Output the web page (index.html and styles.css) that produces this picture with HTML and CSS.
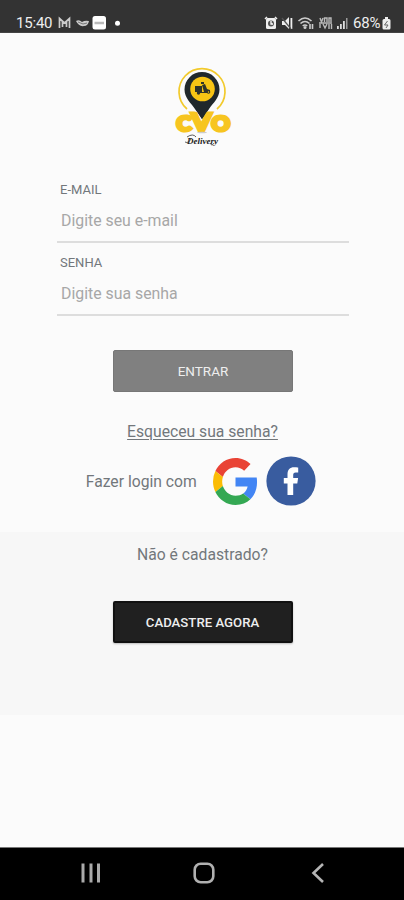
FILE: index.html
```html
<!DOCTYPE html>
<html lang="pt-BR">
<head>
<meta charset="utf-8">
<title>CVO Delivery</title>
<link rel="stylesheet" href="styles.css">
</head>
<body>
<header class="status">
  <span class="clock">15:40</span>
  <svg class="notices" width="66" height="16" viewBox="0 0 66 16">
    <path d="M1.500 13V3.500L6.500 8l5-4.500V13M4.500 12V7M8.500 12V7" fill="none" stroke="#ccc" stroke-width="1.700"/>
    <path d="M18 6q3-2 6 1 3-2 7-1-1 5-5 5-5 1-8-5z" fill="#ccc"/><path d="M20 7l5 2 4-1" stroke="#777" fill="none"/>
    <rect x="34.500" y="1" width="13.500" height="13.500" rx="2.500" fill="#fff"/><path d="M36.500 8h9.500" stroke="#bbb" stroke-width="2.500"/>
    <circle cx="59.500" cy="8.300" r="2.500" fill="#fff"/>
  </svg>
  <svg class="system" width="88" height="16" viewBox="0 0 88 16">
    <rect x="2" y="3" width="10" height="11" rx="1.500" fill="#eee"/><path d="M1 4l2-2M13 4l-2-2" stroke="#eee" stroke-width="1.500"/><circle cx="7" cy="8.500" r="3" fill="#555"/><path d="M7 6v3h2" fill="none" stroke="#fff" stroke-width="1.300"/>
    <path d="M18 6h3l4-4v12l-4-4h-3zM26.500 3h1.800v11h-1.800z" fill="#eee"/><path d="M18 3l9 11" stroke="#555" stroke-width="1.200"/>
    <g fill="none" stroke="#ccc" stroke-width="1.600"><path d="M34.500 6q6.500-6 13 0M36.500 8.500q4.500-4 9 0M38.700 11q2.300-2 4.500 0"/><path d="M46 9v5M48.500 9v5"/></g><circle cx="41" cy="12.500" r="1.500" fill="#ccc"/>
    <g fill="none" stroke="#bbb" stroke-width="1.400"><path d="M56 3l1.500 4L59 3M60.500 7V3h2.500v4M65 7V3h2v4M56 9v4M59 9l2 4 2-4M65 9v5M67.500 9v5M55 8h13"/></g>
    <path d="M73 11h1.800v3H73zM76 9h1.800v5H76zM79 6h1.800v8H79z" fill="#ddd"/><path d="M82 3h1.500v11H82z" fill="#999"/>
  </svg>
  <span class="percent">68%</span>
  <svg class="battery" width="9" height="13" viewBox="0 0 9 13"><path d="M3 0h3v2h1q1.500 0 1.500 1.500v7.500q0 1.500-1.500 1.500H2Q.5 12.500.5 11V3.500Q.5 2 2 2h1z" fill="#eee"/><path d="M5.500 4L2.500 8H6l-2 3" fill="none" stroke="#666"/></svg>
</header>
<main>
  <svg class="logo" width="84" height="90" viewBox="0 0 84 90">
    <path d="M27 49a23 23 0 1 1 30 0" fill="none" stroke="#f2ca2c" stroke-width="1.700"/>
    <path d="M42 12a17.500 17.500 0 0 1 17.500 17.500C59.500 38 53 43 49 49L42 59 35 49C31 43 24.500 38 24.500 29.500A17.500 17.500 0 0 1 42 12z" fill="#20282b"/>
    <circle cx="42.500" cy="29" r="12.300" fill="#f8c414"/>
    <path d="M35 26h7v6h-7zM42 25l3-1 2 5 3 1v3H37v-1h7zM41 22h3v2h-3z" fill="#30332a"/><circle cx="38.500" cy="33" r="1.700" fill="#30332a"/><circle cx="48.500" cy="32" r="1.800" fill="#30332a"/><circle cx="48.500" cy="32" r=".7" fill="#f8c414"/>
    <text class="mark" x="16.500" y="70.500" textLength="53.500" lengthAdjust="spacingAndGlyphs">C<tspan class="tall">V</tspan>O</text>
    <path d="M34.500 47.500h15L42 59z" fill="#20282b"/>
    <ellipse cx="42" cy="72.500" rx="5" ry=".7" fill="#ccc"/>
    <text class="script" x="27" y="83.500" textLength="31" lengthAdjust="spacingAndGlyphs">Delivery</text>
    <path d="M25 82q4 2 6-4M27 77q6-4 9 0M50 83q2 4 4 0" fill="none" stroke="#333" stroke-width=".8"/>
  </svg>
  <form class="login">
    <label for="email">E-MAIL</label>
    <input id="email" type="text" placeholder="Digite seu e-mail">
    <label for="password">SENHA</label>
    <input id="password" type="password" placeholder="Digite sua senha">
    <button class="button enter" type="button">ENTRAR</button>
  </form>
  <a class="forgot">Esqueceu sua senha?</a>
  <div class="social">
    <span>Fazer login com</span>
    <svg class="google" width="45" height="47" viewBox="0 0 48 48" preserveAspectRatio="none">
      <path fill="#e94335" d="M24 9.500c3.540 0 6.710 1.220 9.210 3.600l6.850-6.850C35.900 2.380 30.470 0 24 0 14.620 0 6.510 5.380 2.560 13.220l7.980 6.190C12.430 13.720 17.740 9.500 24 9.500z"/>
      <path fill="#4285f4" d="M46.980 24.550c0-1.570-.15-3.090-.38-4.550H24v9.020h12.940c-.58 2.960-2.260 5.480-4.780 7.180l7.730 6c4.510-4.180 7.090-10.360 7.090-17.650z"/>
      <path fill="#fbbc05" d="M10.530 28.590A14.500 14.500 0 0 1 9.770 24c0-1.600.27-3.140.76-4.590l-7.980-6.190A24 24 0 0 0 0 24c0 3.880.92 7.540 2.560 10.780z"/>
      <path fill="#34a853" d="M24 48c6.480 0 11.930-2.130 15.890-5.810l-7.730-6c-2.150 1.450-4.920 2.300-8.160 2.300-6.260 0-11.570-4.220-13.470-9.910l-7.980 6.190C6.510 42.620 14.620 48 24 48z"/>
    </svg>
    <svg width="50" height="50" viewBox="0 0 50 50"><circle cx="25" cy="25" r="24.600" fill="#395c9f"/><path fill="#fff" d="M21.500 39V27.500h-3.700V22h3.700v-3.500c0-5 2.500-7.300 6.500-7.300 1.500 0 3.200.2 4.200.4v4.900h-2.500c-2 0-2.500 1-2.500 2.500v3h4.900l-.8 5.500h-4.100V39z"/></svg>
  </div>
  <section class="register">
    <p>Não é cadastrado?</p>
    <button class="button join" type="button">CADASTRE AGORA</button>
  </section>
</main>
<nav>
  <svg width="20" height="20" viewBox="0 0 20 20"><path d="M2 .5v19M10 .5v19M17.500 .5v19" stroke="#aaa" stroke-width="3"/></svg>
  <svg class="home" width="22" height="22" viewBox="0 0 22 22"><rect x="1.700" y="1.700" width="18.600" height="18.600" rx="6" fill="none" stroke="#b0b0b0" stroke-width="2.600"/></svg>
  <svg width="14" height="20" viewBox="0 0 14 20"><path d="M12 1L2.500 10l9.500 9" fill="none" stroke="#b5b5b5" stroke-width="2.600"/></svg>
</nav>
</body>
</html>
```
FILE: styles.css
```css
* { box-sizing: border-box; }
body {
  margin: 0;
  width: 404px;
  height: 900px;
  display: flex;
  flex-direction: column;
  background: #fbfbfb;
  color: #72777b;
  font-family: Roboto, sans-serif;
  overflow: hidden;
}
svg { display: block; flex: none; }
.status {
  height: 33px;
  flex: none;
  display: flex;
  align-items: flex-start;
  padding: 15px 13px 0 16px;
  background: #333;
  border-bottom: 1px solid #444;
  color: #eee;
}
.clock { width: 42px; font-size: 15px; line-height: 17px; letter-spacing: -.2px; }
.system { margin-left: auto; }
.percent { width: 29px; margin-left: 1px; font-size: 15px; line-height: 17px; letter-spacing: -.2px; }
.battery { margin-top: 2px; }
main { flex: 1; display: flex; flex-direction: column; align-items: center; }
.logo { margin-top: 27px; align-self: flex-start; margin-left: 160px; }
.mark { fill: #f7c520; stroke: #f7c520; stroke-width: 3.200; font: 900 20px Lato, sans-serif; }
.tall { font-size: 25px; }
.script { fill: #222; font: italic bold 8px "Liberation Serif", serif; }
.login { width: 292px; margin: 30px 0 0 2px; display: flex; flex-direction: column; }
.login label { height: 21px; padding-left: 3px; font-size: 13px; line-height: 20px; }
.login input {
  height: 42px;
  margin-bottom: 9.500px;
  padding: 0 4px 1px;
  border: 0;
  border-bottom: 2px solid #ddd;
  background: none;
  font: 15.850px Roboto, sans-serif;
  outline: 0;
}
.login input::placeholder { color: #a7a7a7; opacity: 1; }
.button {
  width: 180px;
  height: 42px;
  padding: 0;
  border: 1px solid #777;
  border-radius: 2px;
  background: #808080;
  color: #eee;
  font: 13.500px Roboto, sans-serif;
}
.enter { align-self: center; margin-top: 25px; }
.forgot { margin-top: 29px; margin-left: 1px; font-size: 15.700px; line-height: 22px; text-decoration: underline; text-underline-offset: 2px; }
.social { display: flex; align-items: center; height: 50px; margin-top: 13px; margin-left: -2px; font-size: 15.700px; }
.google { margin: 0 8px 0 16.500px; }
.register {
  width: 100%;
  height: 183px;
  margin-top: 26px;
  padding: 11px 0 0 1px;
  background: #f7f7f7;
  display: flex;
  flex-direction: column;
  align-items: center;
}
.register p { margin: 0; font-size: 15.700px; line-height: 23px; }
.join { margin-top: 35px; border: 2px solid #111; background: #202020; box-shadow: 0 1px 2px #bbb; font-size: 13.200px; font-weight: 500; }
nav {
  height: 53px;
  flex: none;
  display: flex;
  justify-content: space-between;
  align-items: center;
  padding: 0 79px 2px 81px;
  background: #000;
  border-top: 1px solid #777;
}
.home { margin-right: 4px; }
```
